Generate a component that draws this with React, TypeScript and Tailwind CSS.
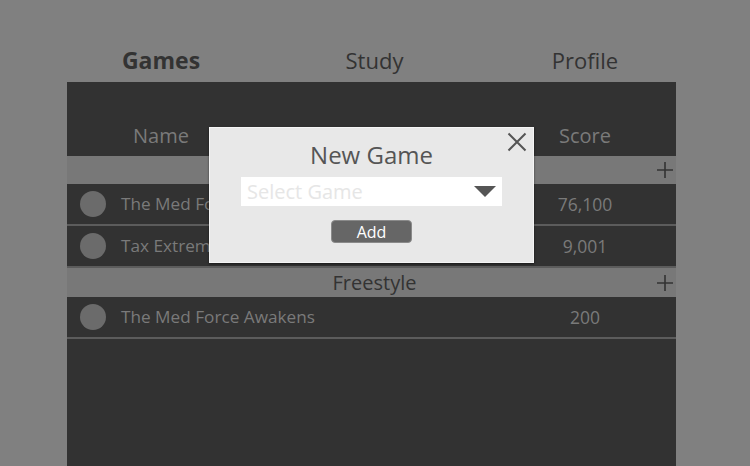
import React from 'react';

const font = { fontFamily: '"Open Sans", "Noto Sans", Arial, sans-serif' };

const Plus: React.FC = () => (
  <svg width="18" height="18" viewBox="0 0 18 18" className="block">
    <path d="M9 1v16M1 9h16" stroke="#333" strokeWidth="1.6" fill="none" />
  </svg>
);

interface Row {
  name: string;
  score: string;
}

const SectionBand: React.FC<{ title?: string; h: string }> = ({ title, h }) => (
  <div className={`grid grid-cols-[188px_1fr_182px] items-center bg-[#787878] ${h}`}>
    <div />
    <div className="text-center text-[20px] text-[#333] leading-none">{title}</div>
    <div className="flex justify-end pr-[2px]">
      <Plus />
    </div>
  </div>
);

const GameRow: React.FC<{ row: Row }> = ({ row }) => (
  <div className="grid grid-cols-[188px_1fr_182px] items-center h-[42px] border-b-2 border-[#5c5c5c]">
    <div className="col-span-2 flex items-center pl-[13px]">
      <div className="w-[26px] h-[26px] rounded-full bg-[#6b6b6b] shrink-0" />
      <span className="ml-[15px] text-[17.2px] text-[#7a7a7a] whitespace-nowrap">{row.name}</span>
    </div>
    <div className="text-center text-[17.5px] text-[#7a7a7a]">{row.score}</div>
  </div>
);

const App: React.FC = () => {
  const campaign: Row[] = [
    { name: 'The Med Force Awakens', score: '76,100' },
    { name: 'Tax Extremes', score: '9,001' },
  ];
  const freestyle: Row[] = [{ name: 'The Med Force Awakens', score: '200' }];

  return (
    <div className="relative w-[750px] h-[466px] overflow-hidden bg-[#808080]" style={font}>
      {/* top nav */}
      <div className="ml-[67px] w-[609px] h-[82px] grid grid-cols-[188px_1fr_182px] items-end pb-[5px] text-[22px] text-[#333]">
        <div className="text-center font-bold text-[23px]">Games</div>
        <div className="text-center">Study</div>
        <div className="text-center">Profile</div>
      </div>

      {/* panel */}
      <div className="ml-[67px] w-[609px] h-[384px] bg-[#323232] flex flex-col">
        <div className="h-[74px] grid grid-cols-[188px_1fr_182px] items-end pb-[5px] text-[20px] text-[#7a7a7a]">
          <div className="text-center">Name</div>
          <div />
          <div className="text-center">Score</div>
        </div>
        <SectionBand h="h-[28px]" />
        {campaign.map((r) => (
          <GameRow key={r.name} row={r} />
        ))}
        <SectionBand title="Freestyle" h="h-[29px]" />
        {freestyle.map((r) => (
          <GameRow key={r.name} row={r} />
        ))}
      </div>

      {/* modal */}
      <div className="absolute left-[209px] top-[127px] w-[325px] h-[136px] bg-[#e8e8e8] border border-[#f5f5f5] shadow-[0_1px_2px_rgba(0,0,0,0.5)] flex flex-col items-center">
        <svg width="20" height="20" viewBox="0 0 20 20" className="absolute right-[6px] top-[4px]">
          <path d="M1.5 1.5l17 17M18.5 1.5l-17 17" stroke="#555" strokeWidth="2" fill="none" />
        </svg>
        <div className="mt-[12px] text-[24px] leading-[30px] text-[#555]">New Game</div>
        <div className="mt-[7px] w-[261px] h-[29px] bg-white flex items-center justify-between pl-[6px] pr-[6px]">
          <span className="text-[20px] text-[#e6e6e6]">Select Game</span>
          <svg width="22" height="11" viewBox="0 0 22 11">
            <path d="M0 0h22L11 11z" fill="#555" />
          </svg>
        </div>
        <button className="mt-[14px] w-[81px] h-[23px] rounded-[4px] bg-[#666] border border-[#8a8a8a] text-white text-[16px] leading-none flex items-center justify-center">
          Add
        </button>
      </div>
    </div>
  );
};

export default App;
